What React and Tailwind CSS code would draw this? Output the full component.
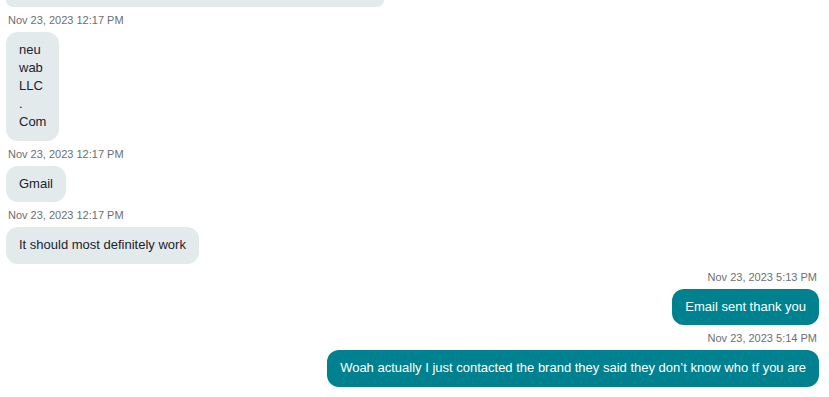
import React from 'react';

const messages = [
    { time: 'Nov 23, 2023 12:17 PM', lines: ['neu', 'wab', 'LLC', '.', 'Com'], mine: false },
    { time: 'Nov 23, 2023 12:17 PM', lines: ['Gmail'], mine: false },
    { time: 'Nov 23, 2023 12:17 PM', lines: ['It should most definitely work'], mine: false },
    { time: 'Nov 23, 2023 5:13 PM', lines: ['Email sent thank you'], mine: true },
    { time: 'Nov 23, 2023 5:14 PM', lines: ["Woah actually I just contacted the brand they said they don\u2019t know who tf you are"], mine: true },
];

const Message = ({ time, lines, mine }) => (
    <div className={`flex flex-col ${mine ? 'items-end' : 'items-start'}`}>
        <div className="mt-[6px] mb-[4px] px-[2px] text-[11px] leading-[15px] text-[#6b6f72]">{time}</div>
        <div
            className={`rounded-xl px-[13px] py-[9.25px] text-[13px] leading-[18px] ${
                mine ? 'bg-[#00818f] text-white' : 'bg-[#e2eaeb] text-[#1b2233]'
            }`}
        >
            {lines.map((l, i) => (
                <div key={i}>{l}</div>
            ))}
        </div>
    </div>
);

export default function App() {
    return (
        <div className="w-[829px] h-[397px] overflow-hidden bg-white pl-[6px] pr-[10px] font-['Liberation_Sans',Arial,sans-serif]">
            {/* tail of the previous bubble, scrolled mostly out of view */}
            <div className="h-[7px] w-[378px] rounded-b-xl bg-[#e2eaeb]" />
            {messages.map((m, i) => (
                <Message key={i} {...m} />
            ))}
        </div>
    );
}
